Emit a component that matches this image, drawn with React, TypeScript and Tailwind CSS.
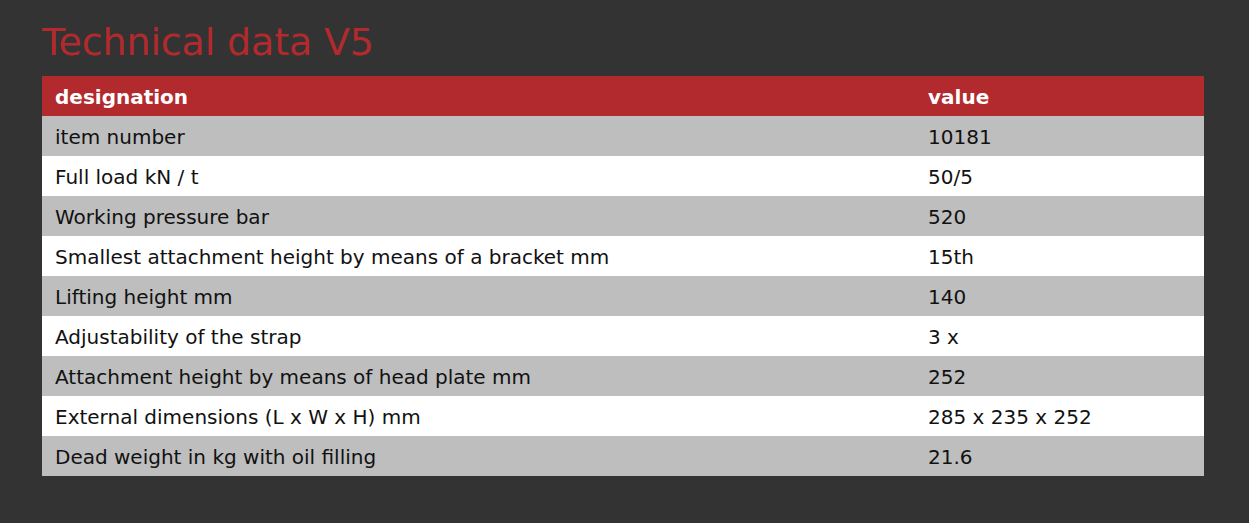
import React from "react";

const rows: [string, string][] = [
  ["item number", "10181"],
  ["Full load kN / t", "50/5"],
  ["Working pressure bar", "520"],
  ["Smallest attachment height by means of a bracket mm", "15th"],
  ["Lifting height mm", "140"],
  ["Adjustability of the strap", "3 x"],
  ["Attachment height by means of head plate mm", "252"],
  ["External dimensions (L x W x H) mm", "285 x 235 x 252"],
  ["Dead weight in kg with oil filling", "21.6"],
];

export default function App() {
  return (
    <div
      className="w-[1249px] h-[523px] bg-[#333333] px-[42px] pt-[19px]"
      style={{ fontFamily: '"DejaVu Sans", Verdana, sans-serif' }}
    >
      <h1 className="text-[38px] leading-[46px] tracking-[-0.15px] text-[#b22a2d] mb-[11px]">Technical data V5</h1>
      <table className="w-[1162px] border-collapse text-[20px] text-[#111]">
        <thead>
          <tr className="bg-[#b22a2d] text-white h-[40px]">
            <th className="w-[873px] text-left font-bold px-[13px] pt-[2px]">designation</th>
            <th className="text-left font-bold px-[13px] pt-[2px]">value</th>
          </tr>
        </thead>
        <tbody>
          {rows.map(([k, v], i) => (
            <tr key={k} className={`h-[40px] ${i % 2 === 0 ? "bg-[#bebebe]" : "bg-white"}`}>
              <td className="px-[13px] pt-[2px]">{k}</td>
              <td className="px-[13px] pt-[2px]">{v}</td>
            </tr>
          ))}
        </tbody>
      </table>
    </div>
  );
}
